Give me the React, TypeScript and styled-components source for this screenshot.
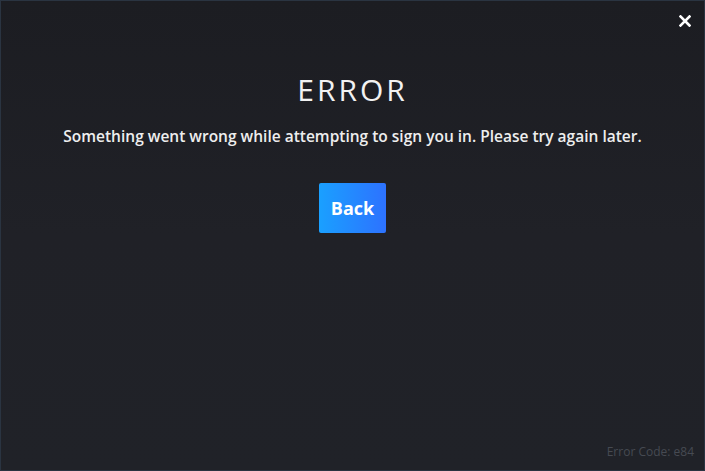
import React from 'react';
import styled, { createGlobalStyle } from 'styled-components';

const Global = createGlobalStyle`
  html, body { margin: 0; padding: 0; background: #1d1e23; }
  body { font-family: "Open Sans", "Liberation Sans", sans-serif; }
`;

const Window = styled.div`
  box-sizing: border-box;
  width: 705px;
  height: 471px;
  border: 1px solid #2a3441;
  background: linear-gradient(180deg, #1c1d22 0%, #202127 50%, #202228 100%);
  display: flex;
  flex-direction: column;
  color: #fff;
`;

const TitleBar = styled.div`
  display: flex;
  justify-content: flex-end;
  height: 40px;
`;

const CloseButton = styled.button`
  width: 34px;
  height: 40px;
  border: none;
  background: none;
  padding: 0;
  display: flex;
  align-items: center;
  justify-content: center;
  cursor: pointer;
  margin-right: 2px;
`;

const Body = styled.div`
  flex: 1;
  display: flex;
  flex-direction: column;
  align-items: center;
`;

const Title = styled.h1`
  margin: 31px 0 0;
  font-family: "Open Sans", "Liberation Sans", sans-serif;
  font-weight: 400;
  font-size: 30px;
  letter-spacing: 3px;
  line-height: 36px;
  color: #f2f2f2;
`;

const Message = styled.p`
  margin: 17px 0 0;
  font-size: 15.5px;
  font-weight: 600;
  color: #eeeeee;
  line-height: 22px;
`;

const BackButton = styled.button`
  margin-top: 36px;
  width: 67px;
  height: 50px;
  border: none;
  border-radius: 2px;
  background: linear-gradient(90deg, #1aa0ff 0%, #2d72ff 100%);
  color: #fff;
  font-family: "Open Sans", "Liberation Sans", sans-serif;
  font-weight: 700;
  font-size: 18px;
  cursor: pointer;
`;

const Footer = styled.div`
  display: flex;
  justify-content: flex-end;
  padding: 0 10px 10px 0;
  font-size: 12px;
  color: #464a52;
`;

export default function App() {
  return (
    <>
      <Global />
      <Window>
        <TitleBar>
          <CloseButton aria-label="Close">
            <svg width="12" height="12" viewBox="0 0 12 12">
              <path d="M1.5 1.5 L10.5 10.5 M10.5 1.5 L1.5 10.5" stroke="#fff" strokeWidth="2.6" strokeLinecap="square" />
            </svg>
          </CloseButton>
        </TitleBar>
        <Body>
          <Title>ERROR</Title>
          <Message>Something went wrong while attempting to sign you in. Please try again later.</Message>
          <BackButton>Back</BackButton>
        </Body>
        <Footer>Error Code: e84</Footer>
      </Window>
    </>
  );
}
